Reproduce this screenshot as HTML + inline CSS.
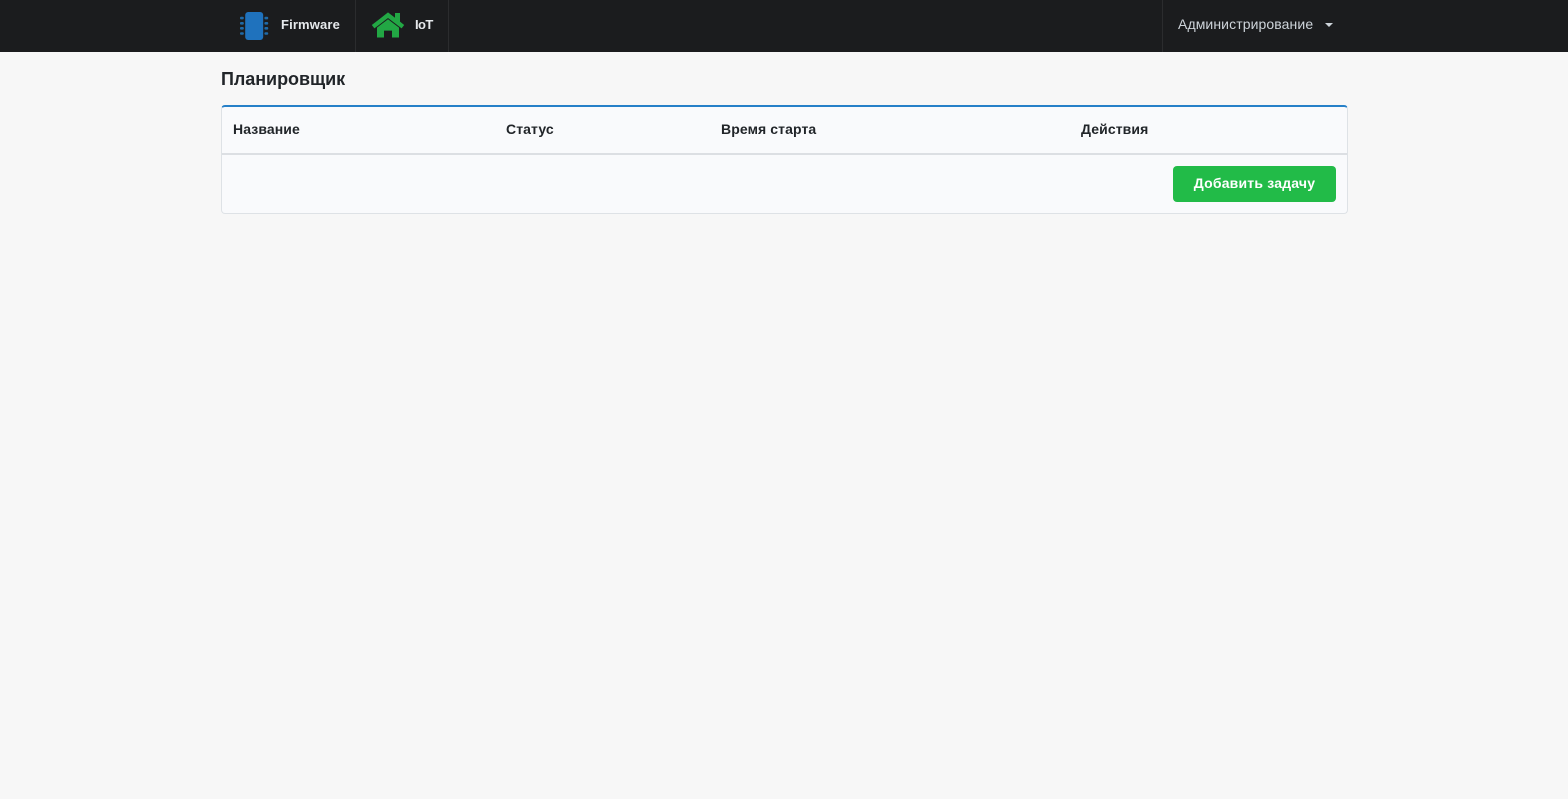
<!DOCTYPE html>
<html lang="ru">
<head>
<meta charset="utf-8">
<title>Планировщик</title>
<style>
html,body{margin:0;padding:0;width:1568px;height:799px;overflow:hidden;background:#f7f7f7;font-family:"Liberation Sans",Arial,sans-serif;color:#212529}
*{box-sizing:border-box}
.abs{position:absolute;white-space:nowrap}
nav{position:absolute;left:0;top:0;width:1568px;height:52px;background:#1b1c1e}
.div{position:absolute;top:0;width:1px;height:52px;background:#2b2c2e}
.brand{font-size:13px;font-weight:bold;color:#e6e9ec;line-height:16px;top:16.5px;letter-spacing:.15px}
.admin{left:1178px;top:16px;font-size:14px;line-height:16px;color:#ced4da;letter-spacing:.1px}
.caret{position:absolute;left:1325px;top:23px;width:0;height:0;border-left:4px solid transparent;border-right:4px solid transparent;border-top:4px solid #ced4da}
h1{position:absolute;left:221px;top:69px;margin:0;font-size:18px;line-height:20px;font-weight:bold;color:#212529;letter-spacing:-.05px}
.card{position:absolute;left:221px;top:105px;width:1127px;height:109px;background:#f9fafc;border:1px solid #dee2e6;border-top:2px solid #2680c8;border-radius:4px}
.sep{position:absolute;left:222px;top:153px;width:1125px;height:2px;background:#dcdfe3}
.th{top:121px;font-size:14px;line-height:16px;font-weight:bold;color:#212529;letter-spacing:.1px}
.btn{position:absolute;left:1173px;top:166px;width:163px;height:36px;background:#22bb48;border-radius:4px;color:#fff;font-size:14px;font-weight:bold;line-height:35px;text-align:center;letter-spacing:.2px}
svg{position:absolute;left:0;top:0}
</style>
</head>
<body>
<nav>
  <svg width="460" height="52" viewBox="0 0 460 52">
    <rect x="245.2" y="12" width="18" height="28" rx="3" fill="#1f72bd"/>
    <g fill="#1f6aa8">
      <rect x="240" y="16.8" width="3.8" height="2.6" rx="1"/><rect x="240" y="22" width="3.8" height="2.6" rx="1"/><rect x="240" y="27" width="3.8" height="2.6" rx="1"/><rect x="240" y="32.2" width="3.8" height="2.6" rx="1"/>
      <rect x="264.4" y="16.8" width="3.8" height="2.6" rx="1"/><rect x="264.4" y="22" width="3.8" height="2.6" rx="1"/><rect x="264.4" y="27" width="3.8" height="2.6" rx="1"/><rect x="264.4" y="32.2" width="3.8" height="2.6" rx="1"/>
    </g>
    <path d="M388 12.4 395 17.8V13H400V21.6L404.2 25 401.6 28.4 388 18 374.4 28.4 371.8 25Z" fill="#22a744"/>
    <path d="M388 19.2 399 27.6V37.5H392V30.6H384V37.5H377V27.6Z" fill="#22a744"/>
  </svg>
  <div class="abs brand" style="left:281px">Firmware</div>
  <div class="div" style="left:355px"></div>
  <div class="abs brand" style="left:415px;letter-spacing:-.6px">IoT</div>
  <div class="div" style="left:448px"></div>
  <div class="div" style="left:1162px"></div>
  <div class="abs admin">Администрирование</div>
  <div class="caret"></div>
</nav>
<h1>Планировщик</h1>
<div class="card"></div>
<div class="sep"></div>
<div class="abs th" style="left:233px">Название</div>
<div class="abs th" style="left:506px">Статус</div>
<div class="abs th" style="left:721px">Время старта</div>
<div class="abs th" style="left:1081px">Действия</div>
<div class="btn">Добавить задачу</div>
</body>
</html>
